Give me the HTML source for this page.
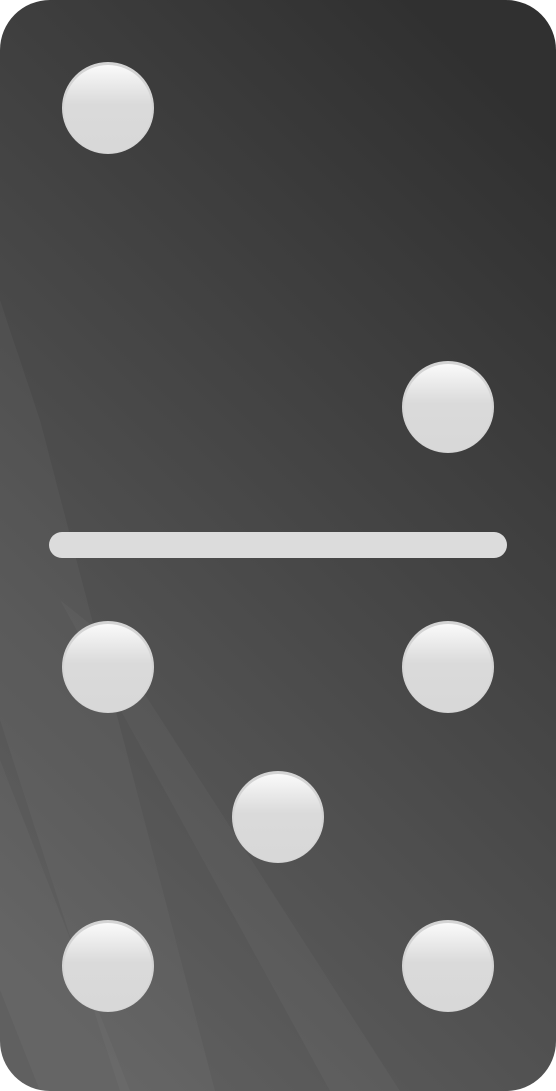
<!DOCTYPE html>
<html><head><style>html,body{margin:0;padding:0;background:#fff;width:556px;height:1091px;overflow:hidden}</style></head>
<body>
<svg width="556" height="1091" viewBox="0 0 556 1091" xmlns="http://www.w3.org/2000/svg">
<defs>
<linearGradient id="bg" x1="0.75" y1="0" x2="0.25" y2="1">
<stop offset="0" stop-color="#303030"/><stop offset="1" stop-color="#606060"/>
</linearGradient>
<linearGradient id="pip" x1="0" y1="0" x2="0" y2="1">
<stop offset="0" stop-color="#fafafa"/><stop offset="0.45" stop-color="#dadada"/><stop offset="1" stop-color="#d8d8d8"/>
</linearGradient>
<clipPath id="c"><rect x="0" y="0" width="556" height="1091" rx="50"/></clipPath>
<g id="p"><circle r="46" fill="#d4d4d4"/><circle r="44" cy="1" fill="url(#pip)"/></g>
</defs>
<rect x="0" y="0" width="556" height="1091" rx="50" fill="url(#bg)"/>
<g clip-path="url(#c)" fill="#fff">
<polygon points="0,300 40,420 215,1091 120,1091 0,720" opacity="0.035"/>
<polygon points="0,760 130,1091 40,1091 0,990" opacity="0.03"/>
<polygon points="60,600 110,640 400,1091 330,1091" opacity="0.03"/>
</g>
<rect x="49" y="532" width="458" height="26" rx="13" fill="#dcdcdc"/>
<use href="#p" x="108" y="108"/>
<use href="#p" x="448" y="407"/>
<use href="#p" x="108" y="667"/>
<use href="#p" x="448" y="667"/>
<use href="#p" x="278" y="817"/>
<use href="#p" x="108" y="966"/>
<use href="#p" x="448" y="966"/>
</svg>
</body></html>
